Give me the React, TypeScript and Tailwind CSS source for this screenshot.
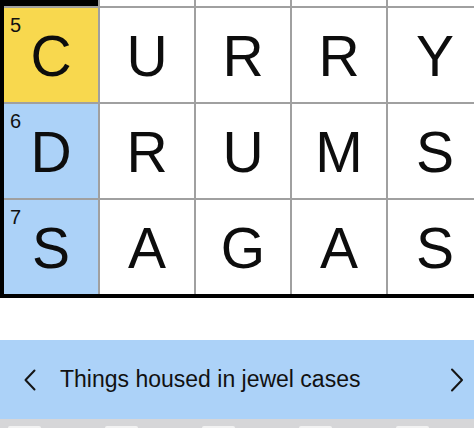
import React from "react";

const rows: { n?: string; letters: string[]; first: string }[] = [
  { n: "5", letters: ["C", "U", "R", "R", "Y"], first: "bg-[#f8d84e]" },
  { n: "6", letters: ["D", "R", "U", "M", "S"], first: "bg-[#acd2f8]" },
  { n: "7", letters: ["S", "A", "G", "A", "S"], first: "bg-[#acd2f8]" },
];

export default function App() {
  return (
    <div
      className="w-[474px] h-[428px] overflow-hidden bg-white flex flex-col"
      style={{ fontFamily: '"Liberation Sans", Arial, sans-serif' }}
    >
      <div className="w-[486px] shrink-0 border-l-4 border-b-4 border-black">
        <div className="grid grid-cols-[repeat(5,94px)] grid-rows-[6px_94px_94px_94px] gap-[2px] bg-[#a0a0a0]">
          <div className="bg-black" />
          <div className="bg-white" />
          <div className="bg-white" />
          <div className="bg-white" />
          <div className="bg-white" />
          {rows.map((r) =>
            r.letters.map((l, i) => (
              <div
                key={r.n + "-" + i}
                className={`relative flex items-center justify-center ${i === 0 ? r.first : "bg-white"}`}
              >
                {i === 0 && (
                  <span className="absolute left-[6px] top-[7px] text-[20px] leading-none text-[#111]">
                    {r.n}
                  </span>
                )}
                <span className="text-[57px] leading-none text-[#0d0d0d] mt-[2px]">{l}</span>
              </div>
            ))
          )}
        </div>
      </div>
      <div className="mt-[42px] h-[79px] shrink-0 bg-[#acd2f8] flex items-center">
        <svg width="14" height="22" viewBox="0 0 14 22" className="ml-[23px] shrink-0">
          <polyline points="11.5,1.5 2.5,11 11.5,20.5" fill="none" stroke="#151515" strokeWidth="2" strokeLinecap="round" strokeLinejoin="round" />
        </svg>
        <span className="ml-[23px] text-[23px] leading-none text-[#111] whitespace-nowrap">
          Things housed in jewel cases
        </span>
        <svg width="14" height="24" viewBox="0 0 14 24" className="ml-auto mr-[10px] shrink-0">
          <polyline points="2,1.5 12,12 2,22.5" fill="none" stroke="#151515" strokeWidth="2" strokeLinecap="round" strokeLinejoin="round" />
        </svg>
      </div>
      <div className="flex-1 bg-[#d6d6d8] flex items-end gap-[64px] pl-[8px]">
        <div className="w-[33px] h-[2px] bg-[#f2f2f2] rounded-t-sm" />
        <div className="w-[33px] h-[2px] bg-[#f2f2f2] rounded-t-sm" />
        <div className="w-[33px] h-[2px] bg-[#f2f2f2] rounded-t-sm" />
        <div className="w-[33px] h-[2px] bg-[#f2f2f2] rounded-t-sm" />
        <div className="w-[33px] h-[2px] bg-[#f2f2f2] rounded-t-sm" />
      </div>
    </div>
  );
}
